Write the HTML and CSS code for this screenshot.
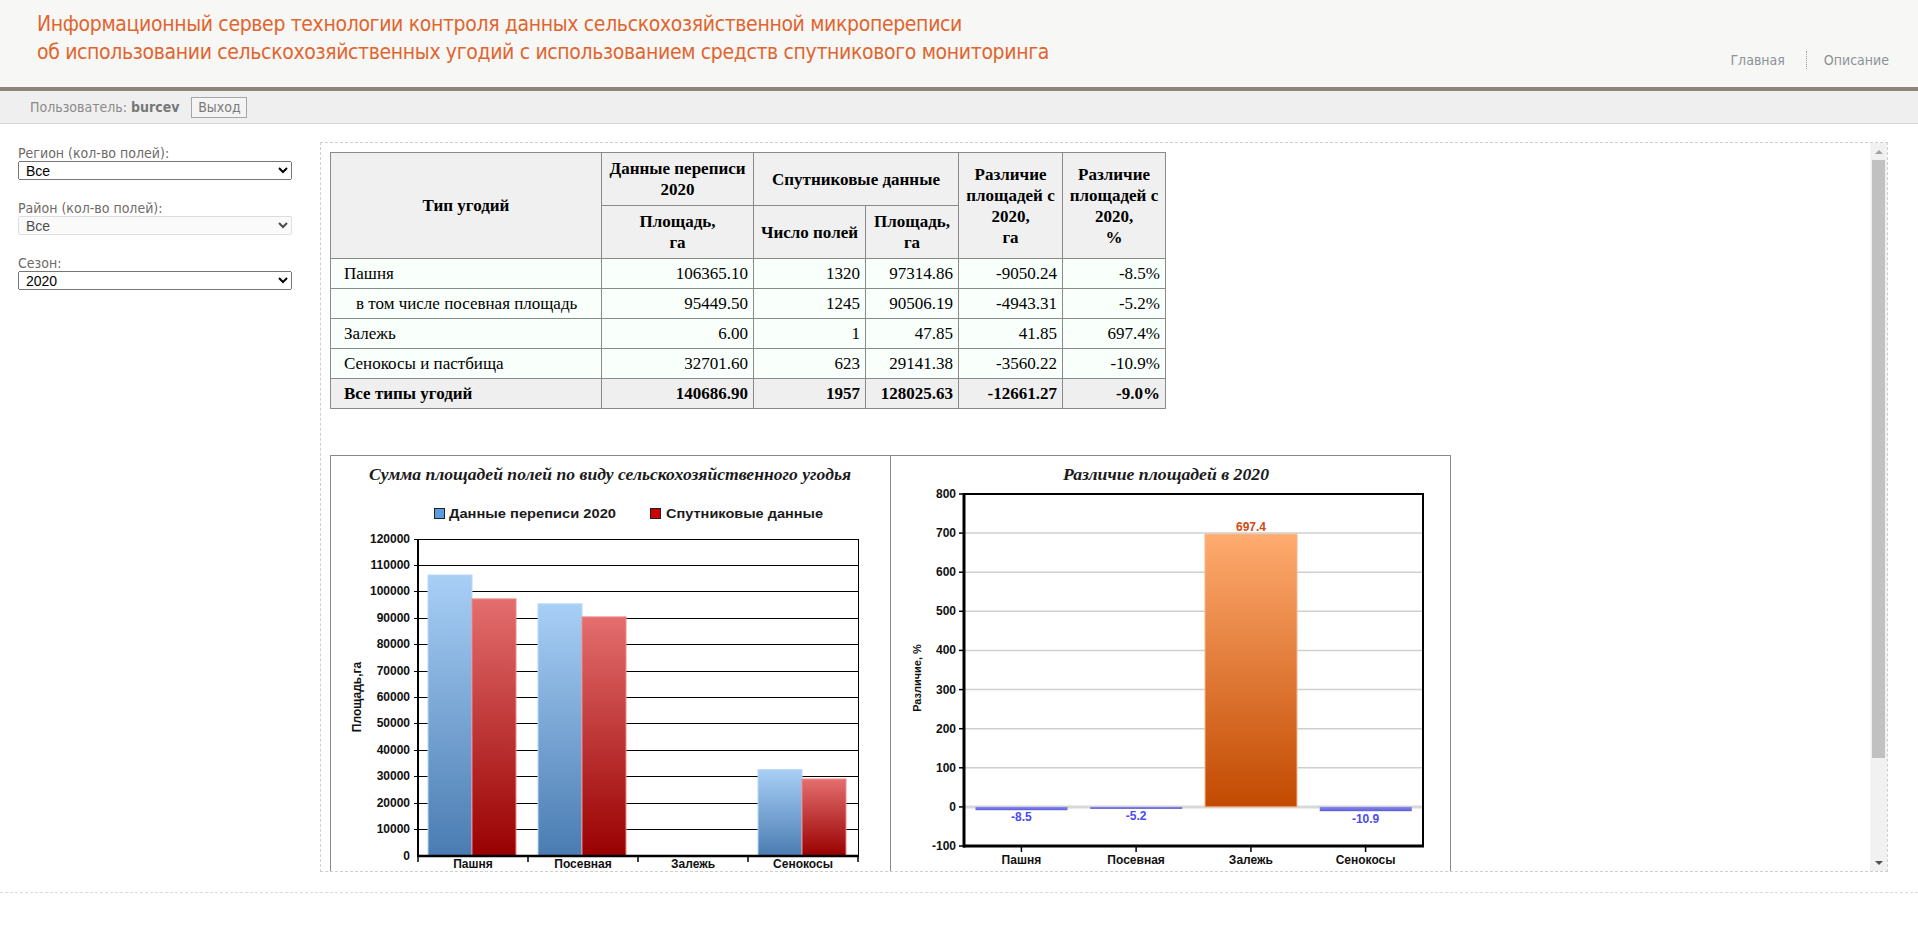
FILE: index.html
```html
<!DOCTYPE html>
<html lang="ru">
<head>
<meta charset="utf-8">
<title>Информационный сервер</title>
<link rel="stylesheet" href="styles.css">
</head>
<body>
<header class="header">
  <div class="title">Информационный сервер технологии контроля данных сельскохозяйственной микропереписи<br>об использовании сельскохозяйственных угодий с использованием средств спутникового мониторинга</div>
  <nav class="nav"><a class="nav-link">Главная</a><span class="nav-sep"></span><a class="nav-link">Описание</a></nav>
</header>
<div class="userbar">
  <span class="user-label">Пользователь: <b class="user-name">burcev</b></span>
  <button class="logout">Выход</button>
</div>
<div class="main">
  <aside class="sidebar">
    <div class="field">
      <label class="field-label">Регион (кол-во полей):</label>
      <select class="field-select"><option>Все</option></select>
    </div>
    <div class="field">
      <label class="field-label">Район (кол-во полей):</label>
      <select class="field-select" disabled><option>Все</option></select>
    </div>
    <div class="field">
      <label class="field-label">Сезон:</label>
      <select class="field-select"><option>2020</option></select>
    </div>
  </aside>
  <section class="panel">
    <div class="panel-body">
      <table class="stats">
        <colgroup>
          <col class="w1"><col class="w2"><col class="w3"><col class="w4"><col class="w5"><col class="w6">
        </colgroup>
        <thead>
          <tr class="hrow">
            <th rowspan="2">Тип угодий</th>
            <th>Данные переписи<br>2020</th>
            <th colspan="2">Спутниковые данные</th>
            <th rowspan="2">Различие<br>площадей с<br>2020,<br>га</th>
            <th rowspan="2">Различие<br>площадей с<br>2020,<br>%</th>
          </tr>
          <tr class="hrow">
            <th>Площадь,<br>га</th>
            <th>Число полей</th>
            <th>Площадь,<br>га</th>
          </tr>
        </thead>
        <tbody>
          <tr><td class="name">Пашня</td><td>106365.10</td><td>1320</td><td>97314.86</td><td>-9050.24</td><td>-8.5%</td></tr>
          <tr><td class="name sub">в том числе посевная площадь</td><td>95449.50</td><td>1245</td><td>90506.19</td><td>-4943.31</td><td>-5.2%</td></tr>
          <tr><td class="name">Залежь</td><td>6.00</td><td>1</td><td>47.85</td><td>41.85</td><td>697.4%</td></tr>
          <tr><td class="name">Сенокосы и пастбища</td><td>32701.60</td><td>623</td><td>29141.38</td><td>-3560.22</td><td>-10.9%</td></tr>
          <tr class="total"><td class="name">Все типы угодий</td><td>140686.90</td><td>1957</td><td>128025.63</td><td>-12661.27</td><td>-9.0%</td></tr>
        </tbody>
      </table>

      <div class="charts">
        <div class="chart">
          <svg class="chart-svg" width="559" height="530" viewBox="0 0 559 530">
            <defs>
              <linearGradient id="gBlue" x1="0" y1="0" x2="0" y2="1">
                <stop offset="0" stop-color="#a8cff6"/>
                <stop offset="1" stop-color="#4a7cb2"/>
              </linearGradient>
              <linearGradient id="gRed" x1="0" y1="0" x2="0" y2="1">
                <stop offset="0" stop-color="#e46e6e"/>
                <stop offset="1" stop-color="#990000"/>
              </linearGradient>
            </defs>
            <text x="279" y="24" text-anchor="middle" class="ctitle" textLength="482" lengthAdjust="spacingAndGlyphs">Сумма площадей полей по виду сельскохозяйственного угодья</text>
            <rect x="103.5" y="52.5" width="10" height="10" fill="#5b9be0" stroke="#222"/>
            <text x="118" y="62" class="legend" textLength="167" lengthAdjust="spacingAndGlyphs">Данные переписи 2020</text>
            <rect x="319.5" y="52.5" width="10" height="10" fill="#cc0000" stroke="#222"/>
            <text x="335" y="62" class="legend" textLength="157" lengthAdjust="spacingAndGlyphs">Спутниковые данные</text>

            <g stroke="#000" stroke-width="1">
              <line x1="83" y1="83.5" x2="527" y2="83.5"/>
              <line x1="83" y1="109.5" x2="527" y2="109.5"/>
              <line x1="83" y1="135.5" x2="527" y2="135.5"/>
              <line x1="83" y1="162.5" x2="527" y2="162.5"/>
              <line x1="83" y1="188.5" x2="527" y2="188.5"/>
              <line x1="83" y1="215.5" x2="527" y2="215.5"/>
              <line x1="83" y1="241.5" x2="527" y2="241.5"/>
              <line x1="83" y1="267.5" x2="527" y2="267.5"/>
              <line x1="83" y1="294.5" x2="527" y2="294.5"/>
              <line x1="83" y1="320.5" x2="527" y2="320.5"/>
              <line x1="83" y1="347.5" x2="527" y2="347.5"/>
              <line x1="83" y1="373.5" x2="527" y2="373.5"/>
              <line x1="527.5" y1="83" x2="527.5" y2="400"/>
            </g>

            <rect x="97" y="119" width="44" height="281" fill="url(#gBlue)" stroke="#b9d8f7" stroke-width="1"/>
            <rect x="141" y="142.9" width="44" height="257.1" fill="url(#gRed)" stroke="#ee8a8a" stroke-width="1"/>
            <rect x="207" y="147.85" width="44" height="252.15" fill="url(#gBlue)" stroke="#b9d8f7" stroke-width="1"/>
            <rect x="251" y="160.9" width="44" height="239.1" fill="url(#gRed)" stroke="#ee8a8a" stroke-width="1"/>
            <rect x="427" y="313.6" width="44" height="86.4" fill="url(#gBlue)" stroke="#b9d8f7" stroke-width="1"/>
            <rect x="471" y="323" width="44" height="77" fill="url(#gRed)" stroke="#ee8a8a" stroke-width="1"/>

            <g stroke="#000">
              <line x1="87" y1="83" x2="87" y2="401" stroke-width="2"/>
              <line x1="86" y1="400" x2="528" y2="400" stroke-width="2.5"/>
              <line x1="87" y1="400" x2="87" y2="406" stroke-width="1.5"/>
              <line x1="197" y1="400" x2="197" y2="406" stroke-width="1.5"/>
              <line x1="307" y1="400" x2="307" y2="406" stroke-width="1.5"/>
              <line x1="417" y1="400" x2="417" y2="406" stroke-width="1.5"/>
              <line x1="527" y1="400" x2="527" y2="406" stroke-width="1.5"/>
            </g>

            <g class="ylab" text-anchor="end">
              <text x="79" y="87">120000</text>
              <text x="79" y="113">110000</text>
              <text x="79" y="139">100000</text>
              <text x="79" y="166">90000</text>
              <text x="79" y="192">80000</text>
              <text x="79" y="219">70000</text>
              <text x="79" y="245">60000</text>
              <text x="79" y="271">50000</text>
              <text x="79" y="298">40000</text>
              <text x="79" y="324">30000</text>
              <text x="79" y="351">20000</text>
              <text x="79" y="377">10000</text>
              <text x="79" y="404">0</text>
            </g>
            <g class="xlab" text-anchor="middle">
              <text x="142" y="412">Пашня</text>
              <text x="252" y="412">Посевная</text>
              <text x="362" y="412">Залежь</text>
              <text x="472" y="412">Сенокосы</text>
            </g>
            <text class="ytitle" transform="translate(30 241) rotate(-90)" text-anchor="middle">Площадь,га</text>
          </svg>
        </div>
        <div class="chart chart-right">
          <svg class="chart-svg" width="559" height="530" viewBox="0 0 559 530">
            <defs>
              <linearGradient id="gOrange" x1="0" y1="0" x2="0" y2="1">
                <stop offset="0" stop-color="#ffab70"/>
                <stop offset="1" stop-color="#c24a00"/>
              </linearGradient>
              <linearGradient id="gViolet" x1="0" y1="0" x2="0" y2="1">
                <stop offset="0" stop-color="#8c8cf0"/>
                <stop offset="1" stop-color="#5a5ad6"/>
              </linearGradient>
            </defs>
            <text x="275" y="24" text-anchor="middle" class="ctitle" textLength="206" lengthAdjust="spacingAndGlyphs">Различие площадей в 2020</text>

            <g stroke="#cfcfcf" stroke-width="1.5">
              <line x1="73" y1="77.1" x2="532" y2="77.1"/>
              <line x1="73" y1="116.2" x2="532" y2="116.2"/>
              <line x1="73" y1="155.3" x2="532" y2="155.3"/>
              <line x1="73" y1="194.4" x2="532" y2="194.4"/>
              <line x1="73" y1="233.6" x2="532" y2="233.6"/>
              <line x1="73" y1="272.7" x2="532" y2="272.7"/>
              <line x1="73" y1="311.8" x2="532" y2="311.8"/>
            </g>
            <line x1="73" y1="350.9" x2="532" y2="350.9" stroke="#d8d8d8" stroke-width="3"/>

            <rect x="314" y="78.1" width="92" height="272.8" fill="url(#gOrange)" stroke="#f3b78c" stroke-width="1"/>
            <rect x="84.5" y="350.9" width="92" height="3.3" fill="url(#gViolet)"/>
            <rect x="199.25" y="350.9" width="92" height="2" fill="url(#gViolet)"/>
            <rect x="428.75" y="350.9" width="92" height="4.3" fill="url(#gViolet)"/>

            <g fill="none" stroke="#000">
              <rect x="73" y="38" width="459" height="352" stroke-width="2"/>
              <line x1="73" y1="37" x2="73" y2="391.5" stroke-width="3"/>
              <line x1="72" y1="390" x2="533" y2="390" stroke-width="3"/>
              <line x1="68" y1="38" x2="73" y2="38" stroke-width="1.5"/>
              <line x1="68" y1="77.1" x2="73" y2="77.1" stroke-width="1.5"/>
              <line x1="68" y1="116.2" x2="73" y2="116.2" stroke-width="1.5"/>
              <line x1="68" y1="155.3" x2="73" y2="155.3" stroke-width="1.5"/>
              <line x1="68" y1="194.4" x2="73" y2="194.4" stroke-width="1.5"/>
              <line x1="68" y1="233.6" x2="73" y2="233.6" stroke-width="1.5"/>
              <line x1="68" y1="272.7" x2="73" y2="272.7" stroke-width="1.5"/>
              <line x1="68" y1="311.8" x2="73" y2="311.8" stroke-width="1.5"/>
              <line x1="68" y1="350.9" x2="73" y2="350.9" stroke-width="1.5"/>
              <line x1="68" y1="390" x2="73" y2="390" stroke-width="1.5"/>
              <line x1="130.4" y1="390" x2="130.4" y2="396" stroke-width="1.5"/>
              <line x1="245.1" y1="390" x2="245.1" y2="396" stroke-width="1.5"/>
              <line x1="359.9" y1="390" x2="359.9" y2="396" stroke-width="1.5"/>
              <line x1="474.6" y1="390" x2="474.6" y2="396" stroke-width="1.5"/>
            </g>

            <g class="ylab" text-anchor="end">
              <text x="65" y="42">800</text>
              <text x="65" y="81">700</text>
              <text x="65" y="120">600</text>
              <text x="65" y="159">500</text>
              <text x="65" y="198">400</text>
              <text x="65" y="238">300</text>
              <text x="65" y="277">200</text>
              <text x="65" y="316">100</text>
              <text x="65" y="355">0</text>
              <text x="65" y="394">-100</text>
            </g>
            <g class="vlab" text-anchor="middle">
              <text x="360" y="75" class="vlab-pos">697.4</text>
              <text x="130.4" y="365" class="vlab-neg">-8.5</text>
              <text x="245.1" y="364" class="vlab-neg">-5.2</text>
              <text x="474.6" y="367" class="vlab-neg">-10.9</text>
            </g>
            <g class="xlab" text-anchor="middle">
              <text x="130.4" y="408">Пашня</text>
              <text x="245.1" y="408">Посевная</text>
              <text x="359.9" y="408">Залежь</text>
              <text x="474.6" y="408">Сенокосы</text>
            </g>
            <text class="ytitle ytitle-sm" transform="translate(30 222) rotate(-90)" text-anchor="middle">Различие, %</text>
          </svg>
        </div>
      </div>
    </div>
    <div class="vscroll">
      <div class="sb-btn"><span class="sb-arrow-up"></span></div>
      <div class="sb-track"><div class="sb-thumb"></div></div>
      <div class="sb-btn"><span class="sb-arrow-down"></span></div>
    </div>
  </section>
</div>
<footer class="footer"></footer>
</body>
</html>
```

FILE: styles.css
```css
html, body {
  margin: 0;
  padding: 0;
  background: #ffffff;
}
body {
  font-family: Tahoma, "DejaVu Sans Condensed", "DejaVu Sans", sans-serif;
  color: #333;
}

/* header */
.header {
  height: 77px;
  padding: 10px 29px 0 37px;
  background: #f7f7f5;
  border-bottom: 4px solid #8f8577;
  display: flex;
  justify-content: space-between;
}
.title {
  color: #e0652f;
  font-size: 21px;
  letter-spacing: -0.35px;
  line-height: 28px;
  white-space: nowrap;
}
.nav {
  display: flex;
  align-items: center;
  margin-top: 41px;
  height: 18px;
  font-size: 14px;
}
.nav-link {
  color: #8d9198;
}
.nav-sep {
  display: block;
  width: 0;
  height: 18px;
  border-left: 1px dotted #9a9a9a;
  margin: 0 17px 0 21px;
}

/* user bar */
.userbar {
  height: 32px;
  background: #efefef;
  border-bottom: 1px solid #d6d6d6;
  display: flex;
  align-items: center;
  padding-left: 30px;
  font-size: 14px;
  color: #8a8a8a;
}
.user-name {
  color: #777;
}
.logout {
  margin-left: 12px;
  height: 21px;
  width: 56px;
  padding: 0;
  border: 1px solid #a6a6a6;
  background: #f4f4f4;
  color: #7a7a7a;
  font-family: inherit;
  font-size: 14px;
}

/* main */
.main {
  display: flex;
  padding-top: 18px;
}
.sidebar {
  width: 274px;
  padding: 3px 28px 0 18px;
}
.field {
  display: flex;
  flex-direction: column;
  margin-bottom: 20px;
}
.field-label {
  font-size: 14px;
  line-height: 16px;
  color: #6e6a66;
}
.field-select {
  width: 274px;
  height: 19px;
  font-family: "Liberation Sans", Arial, sans-serif;
  font-size: 14px;
  padding: 0 0 0 3px;
  color: #000;
}

/* panel */
.panel {
  width: 1566px;
  height: 728px;
  border: 1px dashed #cfcfcf;
  display: flex;
}
.panel-body {
  flex: 1;
  overflow: hidden;
  padding: 9px;
}
.vscroll {
  width: 17px;
  background: #f1f1f1;
  display: flex;
  flex-direction: column;
}
.sb-btn {
  height: 17px;
  display: flex;
  align-items: center;
  justify-content: center;
}
.sb-arrow-up {
  width: 0;
  height: 0;
  border-left: 4px solid transparent;
  border-right: 4px solid transparent;
  border-bottom: 4px solid #a3a3a3;
}
.sb-arrow-down {
  width: 0;
  height: 0;
  border-left: 4px solid transparent;
  border-right: 4px solid transparent;
  border-top: 4px solid #505050;
}
.sb-track {
  flex: 1;
  padding: 0 2px;
}
.sb-thumb {
  height: 598px;
  background: #c1c1c1;
}

/* table */
.stats {
  border-collapse: collapse;
  font-family: "Liberation Serif", "Times New Roman", serif;
  font-size: 17px;
  color: #000;
}
.w1 { width: 271px; }
.w2 { width: 152px; }
.w3 { width: 112px; }
.w4 { width: 93px; }
.w5 { width: 104px; }
.w6 { width: 103px; }
.stats th,
.stats td {
  border: 1px solid #8a8a8a;
}
.stats th {
  background: #f0f0f0;
  font-weight: bold;
  line-height: 21px;
  height: 52px;
  padding: 0 4px;
  text-align: center;
  vertical-align: middle;
}
.stats td {
  background: #f9fffa;
  height: 29px;
  padding: 0 5px;
  text-align: right;
  line-height: 20px;
}
.stats td.name {
  text-align: left;
  padding-left: 13px;
}
.stats td.sub {
  padding-left: 25px;
}
.stats .total td {
  background: #efefef;
  font-weight: bold;
}

/* charts */
.charts {
  display: flex;
  width: max-content;
  margin-top: 46px;
  border: 1px solid #8a8a8a;
  background: #fff;
}
.chart {
  width: 559px;
}
.chart-right {
  border-left: 1px solid #8a8a8a;
}
.chart-svg {
  display: block;
}
.ctitle {
  font-family: "Liberation Serif", "Times New Roman", serif;
  font-style: italic;
  font-weight: bold;
  font-size: 16px;
  fill: #1a1a1a;
}
.legend {
  font-family: "Liberation Sans", Arial, sans-serif;
  font-weight: bold;
  font-size: 13px;
  fill: #1a1a1a;
}
.ylab text,
.xlab text {
  font-family: "Liberation Sans", Arial, sans-serif;
  font-weight: bold;
  font-size: 12px;
  fill: #111;
}
.ytitle {
  font-family: "Liberation Sans", Arial, sans-serif;
  font-weight: bold;
  font-size: 12px;
  fill: #111;
}
.ytitle-sm {
  font-size: 11px;
}
.vlab text {
  font-family: "Liberation Sans", Arial, sans-serif;
  font-weight: bold;
  font-size: 12px;
}
.vlab-pos { fill: #d24a12; }
.vlab-neg { fill: #4a4af5; }

/* footer */
.footer {
  margin-top: 20px;
  border-top: 1px dashed #dcdcdc;
  height: 32px;
}
```
